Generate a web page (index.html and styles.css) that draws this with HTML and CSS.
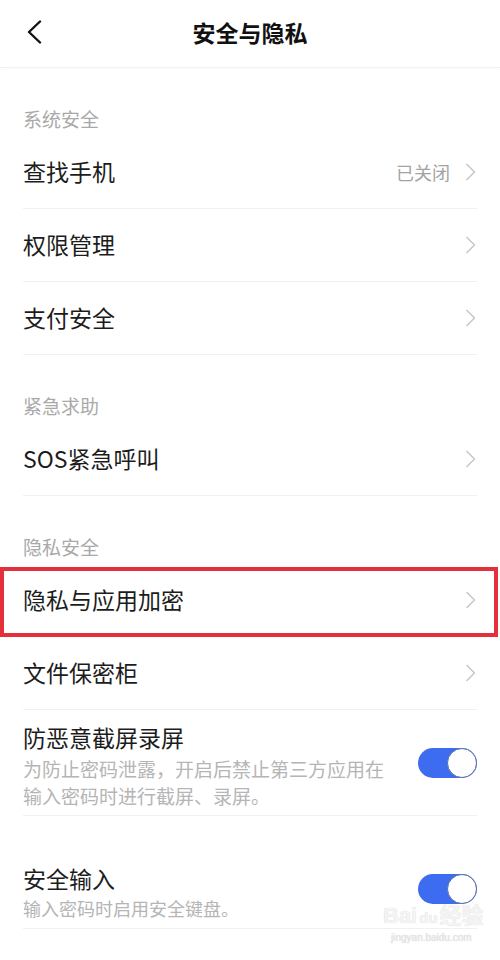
FILE: index.html
```html
<!DOCTYPE html>
<html lang="zh-CN">
<head>
<meta charset="utf-8">
<title>安全与隐私</title>
<link rel="stylesheet" href="styles.css">
</head>
<body>
<div class="page">
  <header class="header">
    <div class="back">
      <svg width="16" height="24" viewBox="0 0 16 24"><path d="M14 1.5 L3 12 L14 22.5" fill="none" stroke="#111" stroke-width="2.4" stroke-linecap="round" stroke-linejoin="round"/></svg>
    </div>
    <h1 class="title">安全与隐私</h1>
    <div class="spacer"></div>
  </header>

  <div class="group-label">系统安全</div>
  <div class="row"><span class="row-text">查找手机</span><span class="row-right"><span class="status">已关闭</span><svg class="chev" width="11" height="18" viewBox="0 0 11 18"><path d="M1.5 1 L9.5 9 L1.5 17" fill="none" stroke="#c8c8c8" stroke-width="1.6" stroke-linejoin="round"/></svg></span></div>
  <div class="row"><span class="row-text">权限管理</span><span class="row-right"><svg class="chev" width="11" height="18" viewBox="0 0 11 18"><path d="M1.5 1 L9.5 9 L1.5 17" fill="none" stroke="#c8c8c8" stroke-width="1.6" stroke-linejoin="round"/></svg></span></div>
  <div class="row"><span class="row-text">支付安全</span><span class="row-right"><svg class="chev" width="11" height="18" viewBox="0 0 11 18"><path d="M1.5 1 L9.5 9 L1.5 17" fill="none" stroke="#c8c8c8" stroke-width="1.6" stroke-linejoin="round"/></svg></span></div>

  <div class="group-label">紧急求助</div>
  <div class="row"><span class="row-text">SOS紧急呼叫</span><span class="row-right"><svg class="chev" width="11" height="18" viewBox="0 0 11 18"><path d="M1.5 1 L9.5 9 L1.5 17" fill="none" stroke="#c8c8c8" stroke-width="1.6" stroke-linejoin="round"/></svg></span></div>

  <div class="group-label">隐私安全</div>
  <div class="item highlighted">
    <div class="row"><span class="row-text">隐私与应用加密</span><span class="row-right"><svg class="chev" width="11" height="18" viewBox="0 0 11 18"><path d="M1.5 1 L9.5 9 L1.5 17" fill="none" stroke="#c8c8c8" stroke-width="1.6" stroke-linejoin="round"/></svg></span></div>
    <div class="red-box"></div>
  </div>
  <div class="row"><span class="row-text">文件保密柜</span><span class="row-right"><svg class="chev" width="11" height="18" viewBox="0 0 11 18"><path d="M1.5 1 L9.5 9 L1.5 17" fill="none" stroke="#c8c8c8" stroke-width="1.6" stroke-linejoin="round"/></svg></span></div>

  <div class="switch-row first">
    <div class="switch-text">
      <div class="row-text">防恶意截屏录屏</div>
      <div class="desc">为防止密码泄露，开启后禁止第三方应用在输入密码时进行截屏、录屏。</div>
    </div>
    <div class="toggle"><span class="knob"></span></div>
  </div>

  <div class="switch-row second">
    <div class="switch-text">
      <div class="row-text">安全输入</div>
      <div class="desc">输入密码时启用安全键盘。</div>
    </div>
    <div class="toggle"><span class="knob"></span></div>
  </div>

  <div class="watermark">
    <div class="wm-main">Bai<span class="wm-du">du</span>经验</div>
    <div class="wm-sub">jingyan.baidu.com</div>
  </div>
</div>
</body>
</html>
```

FILE: styles.css
```css
* { box-sizing: border-box; }
html, body {
  margin: 0;
  padding: 0;
  background: #ffffff;
}
body {
  font-family: "Noto Sans CJK SC", "Noto Sans", sans-serif;
  color: #1c1c1c;
}
.page {
  position: relative;
  width: 500px;
  height: 960px;
  overflow: hidden;
  background: #fff;
}
.header {
  height: 68px;
  display: grid;
  grid-template-columns: 70px 1fr 70px;
  align-items: center;
  border-bottom: 1px solid #f1f1f1;
  box-shadow: 0 1px 2px rgba(0,0,0,0.02);
}
.back {
  padding-left: 26px;
  display: flex;
  align-items: center;
  height: 100%;
  padding-bottom: 3px;
}
.title {
  margin: 0;
  text-align: center;
  font-size: 23px;
  font-weight: 700;
  color: #111;
  line-height: 30px;
  padding-bottom: 4px;
}
.group-label {
  padding: 39px 23px 5px;
  line-height: 24px;
  font-size: 19px;
  color: #a9a9a9;
  height: 68px;
}
.row {
  height: 73px;
  margin: 0 23px;
  padding-bottom: 3px;
  display: flex;
  align-items: center;
  justify-content: space-between;
  border-bottom: 1px solid #f0f0f0;
}
.row-text {
  font-size: 23px;
  line-height: 30px;
  color: #1c1c1c;
}
.row-right {
  display: flex;
  align-items: center;
  gap: 15px;
  padding-right: 1px;
  padding-top: 2px;
}
.status {
  font-size: 18px;
  color: #a3a3a3;
}
.chev { display: block; }
.item {
  position: relative;
}
.red-box {
  position: absolute;
  left: 0;
  top: 3px;
  width: 498px;
  height: 70px;
  border: 4px solid #e3303b;
  pointer-events: none;
}
.switch-row {
  margin: 0 23px;
  display: flex;
  align-items: center;
  justify-content: space-between;
  border-bottom: 1px solid #f0f0f0;
}
.switch-row.first {
  padding: 12px 0 6px;
}
.switch-row.second {
  padding: 47px 0 6px;
}
.switch-text {
  width: 372px;
}
.desc {
  margin-top: 3px;
  font-size: 19px;
  line-height: 27px;
  color: #b5b5b5;
}
.switch-row.second .desc {
  margin-top: 2px;
  font-size: 18px;
}
.toggle {
  position: relative;
  width: 59px;
  height: 30px;
  border-radius: 15px;
  background: #3d6cf0;
  margin-bottom: 5px;
  flex-shrink: 0;
}
.switch-row.second .toggle {
  margin-bottom: 8px;
}
.knob {
  position: absolute;
  right: 0;
  top: 0;
  width: 30px;
  height: 30px;
  border-radius: 50%;
  background: #fff;
  border: 1.5px solid #5b6ea6;
}
.watermark {
  position: absolute;
  left: 383px;
  top: 903px;
  color: #f4f4f4;
  text-shadow: 0 0 1px #d2d2d2;
  font-family: "Liberation Sans", "Noto Sans CJK SC", sans-serif;
}
.wm-main {
  font-size: 22px;
  font-weight: 700;
  line-height: 26px;
}
.wm-du {
  font-size: 15px;
  margin: 0 2px;
}
.wm-sub {
  font-size: 10px;
  line-height: 14px;
  padding-left: 8px;
  color: #e6e6e6;
}
```
